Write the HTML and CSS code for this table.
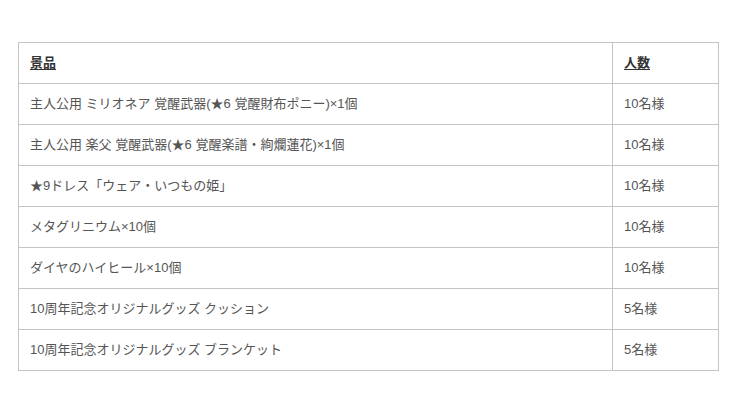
FILE: index.html
```html
<!DOCTYPE html>
<html lang="ja">
<head>
<meta charset="utf-8">
<link rel="stylesheet" href="styles.css">
</head>
<body>
<div class="wrap">
<table class="prize">
<colgroup><col class="c1"><col class="c2"></colgroup>
<thead>
<tr><th><u>景品</u></th><th><u>人数</u></th></tr>
</thead>
<tbody>
<tr><td>主人公用 ミリオネア 覚醒武器(★6 覚醒財布ポニー)×1個</td><td>10名様</td></tr>
<tr><td>主人公用 楽父 覚醒武器(★6 覚醒楽譜・絢爛蓮花)×1個</td><td>10名様</td></tr>
<tr><td>★9ドレス「ウェア・いつもの姫」</td><td>10名様</td></tr>
<tr><td>メタグリニウム×10個</td><td>10名様</td></tr>
<tr><td>ダイヤのハイヒール×10個</td><td>10名様</td></tr>
<tr><td>10周年記念オリジナルグッズ クッション</td><td>5名様</td></tr>
<tr><td>10周年記念オリジナルグッズ ブランケット</td><td>5名様</td></tr>
</tbody>
</table>
</div>
</body>
</html>
```

FILE: styles.css
```css
html, body {
  margin: 0;
  padding: 0;
  background: #fff;
}
body {
  font-family: "Liberation Sans", "Noto Sans CJK JP", sans-serif;
  font-size: 13px;
  color: #555;
}
.wrap {
  padding: 42px 0 0 18px;
}
.prize {
  border-collapse: collapse;
  width: 700px;
  table-layout: fixed;
}
.c1 { width: 594px; }
.c2 { width: 106px; }
.prize th, .prize td {
  border: 1px solid #c4c4c4;
  height: 41px;
  padding: 0 11px;
  box-sizing: border-box;
  text-align: left;
  vertical-align: middle;
  font-weight: normal;
  line-height: 18px;
}
.prize th {
  color: #333;
  font-weight: bold;
}
.prize th u {
  text-decoration: underline;
  text-underline-offset: 2px;
}
```
